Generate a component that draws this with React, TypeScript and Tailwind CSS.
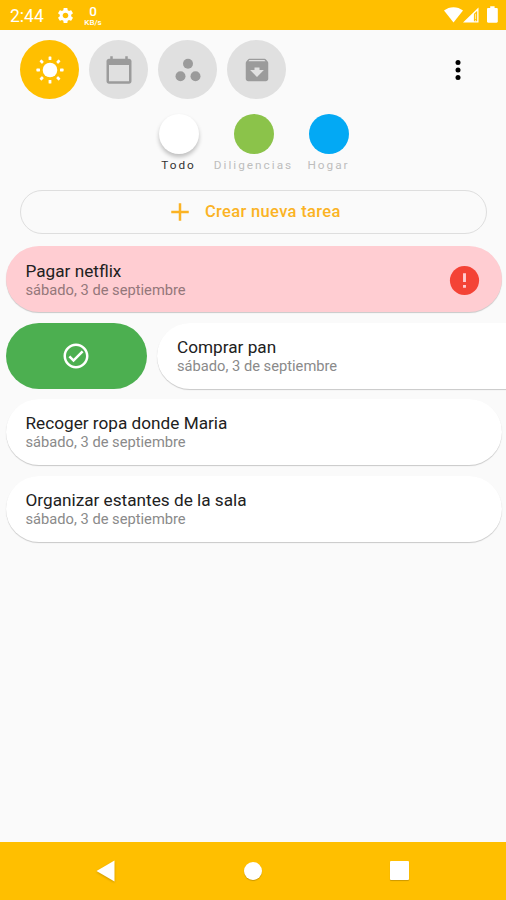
import type { ReactNode } from "react";
import clsx from "clsx";

type Task = {
  title: string;
  date: string;
  urgent?: boolean;
  swiped?: boolean;
};

const tasks: Task[] = [
  { title: "Pagar netflix", date: "sábado, 3 de septiembre", urgent: true },
  { title: "Comprar pan", date: "sábado, 3 de septiembre", swiped: true },
  { title: "Recoger ropa donde Maria", date: "sábado, 3 de septiembre" },
  { title: "Organizar estantes de la sala", date: "sábado, 3 de septiembre" },
];

const categories = [
  { name: "Todo", color: "bg-white shadow-[0_3px_4px_rgba(0,0,0,0.24)]", active: true },
  { name: "Diligencias", color: "bg-[#8bc34a]", active: false },
  { name: "Hogar", color: "bg-[#03a9f4]", active: false },
];

function Icon({ className, children }: { className?: string; children: ReactNode }) {
  return (
    <svg viewBox="0 0 24 24" fill="currentColor" className={clsx("shrink-0", className)}>
      {children}
    </svg>
  );
}

function StatusBar() {
  return (
    <header className="flex h-[29.5px] shrink-0 items-center bg-[#ffbf00] pl-[10px] pr-[8.5px] text-white">
      <span className="w-[46px] pt-[3px] text-[17.5px] leading-none">2:44</span>
      <Icon className="mt-[2px] size-[19px]">
        <path d="M19.14 12.94c.04-.3.06-.61.06-.94 0-.32-.02-.64-.07-.94l2.03-1.58c.18-.14.23-.41.12-.61l-1.92-3.32c-.12-.22-.37-.29-.59-.22l-2.39.96c-.5-.38-1.03-.7-1.62-.94l-.36-2.54c-.04-.24-.24-.41-.48-.41h-3.84c-.24 0-.43.17-.47.41l-.36 2.54c-.59.24-1.13.57-1.62.94l-2.39-.96c-.22-.08-.47 0-.59.22L2.74 8.87c-.12.21-.08.47.12.61l2.03 1.58c-.05.3-.09.63-.09.94s.02.64.07.94l-2.03 1.58c-.18.14-.23.41-.12.61l1.92 3.32c.12.22.37.29.59.22l2.39-.96c.5.38 1.03.7 1.62.94l.36 2.54c.05.24.24.41.48.41h3.84c.24 0 .44-.17.47-.41l.36-2.54c.59-.24 1.13-.56 1.62-.94l2.39.96c.22.08.47 0 .59-.22l1.92-3.32c.12-.22.07-.47-.12-.61l-2.01-1.58zM12 15.6c-1.98 0-3.6-1.62-3.6-3.6s1.62-3.6 3.6-3.6 3.6 1.62 3.6 3.6-1.62 3.6-3.6 3.6z" />
      </Icon>
      <div className="ml-[7px] flex w-[22px] flex-col items-center pt-[2px] font-medium">
        <span className="text-[13.5px] leading-[13px]">0</span>
        <span className="text-[8px] leading-[9px]">KB/s</span>
      </div>
      <div className="ml-auto flex items-center">
        <svg width="19" height="16" viewBox="0 0 19 16" fill="currentColor">
          <path d="M0 3.6C5.4-.9 13.6-.9 19 3.6L9.5 15.5z" />
        </svg>
        <svg width="16" height="16" viewBox="0 0 16 16" fill="currentColor">
          <path fillRule="evenodd" d="M0 15.6L15.5.6v15zM10.9 6.9v7.4h3.3V3.8z" />
          <path d="M11.9 6.8h1.2v5.4h-1.2zM11.9 13h1.2v1.6h-1.2z" opacity=".6" />
        </svg>
        <svg width="11" height="17" viewBox="0 0 11 17" fill="currentColor" className="ml-[8px]">
          <path d="M1.2 2H3.2V.3h4.4V2h2c.7 0 1.2.5 1.2 1.2v12.3c0 .7-.5 1.2-1.2 1.2H1.2C.5 16.7 0 16.2 0 15.5V3.2C0 2.5.5 2 1.2 2z" />
        </svg>
      </div>
    </header>
  );
}

function TabButton({ active, children }: { active?: boolean; children: ReactNode }) {
  return (
    <button
      className={clsx(
        "flex size-[59px] items-center justify-center rounded-full",
        active ? "bg-[#ffbf00] text-white" : "bg-[#e0e0e0] text-[#9b9b9b]",
      )}
    >
      {children}
    </button>
  );
}

function Toolbar() {
  return (
    <div className="flex items-center gap-[10px] pl-[20px] pr-[33.5px] pt-[10.5px]">
      <TabButton active>
        <svg viewBox="-15 -15 30 30" fill="currentColor" className="size-[30px]">
          <circle r="7.3" />
          {[0, 45, 90, 135, 180, 225, 270, 315].map((angle) => (
            <rect key={angle} x="-1.4" y="-13.6" width="2.8" height="3.6" rx="0.6" transform={`rotate(${angle})`} />
          ))}
        </svg>
      </TabButton>
      <TabButton>
        <Icon className="size-[30px]">
          <path d="M20 3h-1V1h-2v2H7V1H5v2H4c-1.1 0-2 .9-2 2v16c0 1.1.9 2 2 2h16c1.1 0 2-.9 2-2V5c0-1.1-.9-2-2-2zm0 18H4V8h16v13z" />
        </Icon>
      </TabButton>
      <TabButton>
        <Icon className="size-[30px]">
          <circle cx="12" cy="7" r="4" />
          <circle cx="6" cy="17" r="4" />
          <circle cx="18" cy="17" r="4" />
        </Icon>
      </TabButton>
      <TabButton>
        <Icon className="size-[30px]">
          <path d="M20.54 5.23l-1.39-1.68C18.88 3.21 18.47 3 18 3H6c-.47 0-.88.21-1.16.55L3.46 5.23C3.17 5.57 3 6.02 3 6.5V19c0 1.1.9 2 2 2h14c1.1 0 2-.9 2-2V6.5c0-.48-.17-.93-.46-1.27zM12 17.5L6.5 12H10v-2h4v2h3.5L12 17.5zM5.12 5l.81-1h12l.94 1H5.12z" />
        </Icon>
      </TabButton>
      <button className="ml-auto text-black">
        <Icon className="size-[30px]">
          <circle cx="12" cy="6" r="2" />
          <circle cx="12" cy="12" r="2" />
          <circle cx="12" cy="18" r="2" />
        </Icon>
      </button>
    </div>
  );
}

function CategoryList() {
  return (
    <div className="mt-[14.7px] flex justify-center pl-[1px]">
      {categories.map((category) => (
        <div key={category.name} className="flex w-[75px] flex-col items-center">
          <div className={clsx("size-[40px] rounded-full", category.color)} />
          <span
            className={clsx(
              "mt-[4px] whitespace-nowrap text-[11.8px] leading-[15px] tracking-[2px]",
              category.active ? "text-[#333333]" : "text-[#bdbdbd]",
            )}
          >
            {category.name}
          </span>
        </div>
      ))}
    </div>
  );
}

function TaskCard({ task }: { task: Task }) {
  return (
    <div
      className={clsx(
        "flex h-[66px] shrink-0 items-center justify-between rounded-full px-[20px] pt-[1.4px] shadow-[0_1px_1px_rgba(0,0,0,0.2)]",
        task.urgent ? "bg-[#ffcdd2]" : "bg-white",
        task.swiped ? "w-[496px]" : "w-full",
      )}
    >
      <div>
        <p className="text-[17.2px] leading-[19px] text-[#212121]">{task.title}</p>
        <p className={clsx("text-[14.7px] leading-[18px]", task.urgent ? "text-[#94777a]" : "text-[#8a8a8a]")}>
          {task.date}
        </p>
      </div>
      {task.urgent && (
        <Icon className="size-[35px] text-[#f44336]">
          <circle cx="12" cy="12" r="10" />
          <path fill="#ffcdd2" d="M11 7h2v6h-2zM11 15h2v2h-2z" />
        </Icon>
      )}
    </div>
  );
}

function TaskRow({ task }: { task: Task }) {
  if (!task.swiped) return <TaskCard task={task} />;

  return (
    <div className="flex gap-[10px]">
      <div className="flex h-[66px] w-[141.5px] shrink-0 items-center justify-center rounded-full bg-[#4caf50] text-white">
        <Icon className="size-[30px]">
          <path d="M16.59 7.58L10 14.17l-2.59-2.58L6 13l4 4 8-8zM12 2C6.48 2 2 6.48 2 12s4.48 10 10 10 10-4.48 10-10S17.52 2 12 2zm0 18c-4.42 0-8-3.58-8-8s3.58-8 8-8 8 3.58 8 8-3.58 8-8 8z" />
        </Icon>
      </div>
      <TaskCard task={task} />
    </div>
  );
}

function NavigationBar() {
  return (
    <nav className="flex h-[58.5px] shrink-0 items-center justify-between bg-[#ffbf00] pl-[96px] pr-[97px] text-white">
      <svg width="19" height="22" viewBox="0 0 19 22" fill="currentColor" className="drop-shadow-[0_1px_1px_rgba(0,0,0,0.2)]">
        <path d="M.5 11L18.5.5v21z" />
      </svg>
      <div className="size-[18px] rounded-full bg-white shadow-[0_1px_1px_rgba(0,0,0,0.2)]" />
      <div className="size-[19px] rounded-[1px] bg-white shadow-[0_1px_1px_rgba(0,0,0,0.2)]" />
    </nav>
  );
}

export default function App() {
  return (
    <div className="flex h-[900px] w-[506px] flex-col overflow-hidden bg-[#fafafa] font-['Roboto',sans-serif]">
      <StatusBar />
      <main className="min-h-0 flex-1 overflow-hidden">
        <Toolbar />
        <CategoryList />
        <button className="mx-[20px] mt-[17px] flex h-[44px] w-[467px] items-center rounded-full border border-[#dedede] pl-[144px] pt-px text-[#fbb324]">
          <Icon className="size-[30px]">
            <path d="M19 13h-6v6h-2v-6H5v-2h6V5h2v6h6v2z" />
          </Icon>
          <span className="ml-[10px] pt-px text-[16.5px] font-medium tracking-[0.33px]">Crear nueva tarea</span>
        </button>
        <div className="mt-[12.8px] flex flex-col gap-[10.4px] pl-[5.5px] pr-[4px]">
          {tasks.map((task) => (
            <TaskRow key={task.title} task={task} />
          ))}
        </div>
      </main>
      <NavigationBar />
    </div>
  );
}
